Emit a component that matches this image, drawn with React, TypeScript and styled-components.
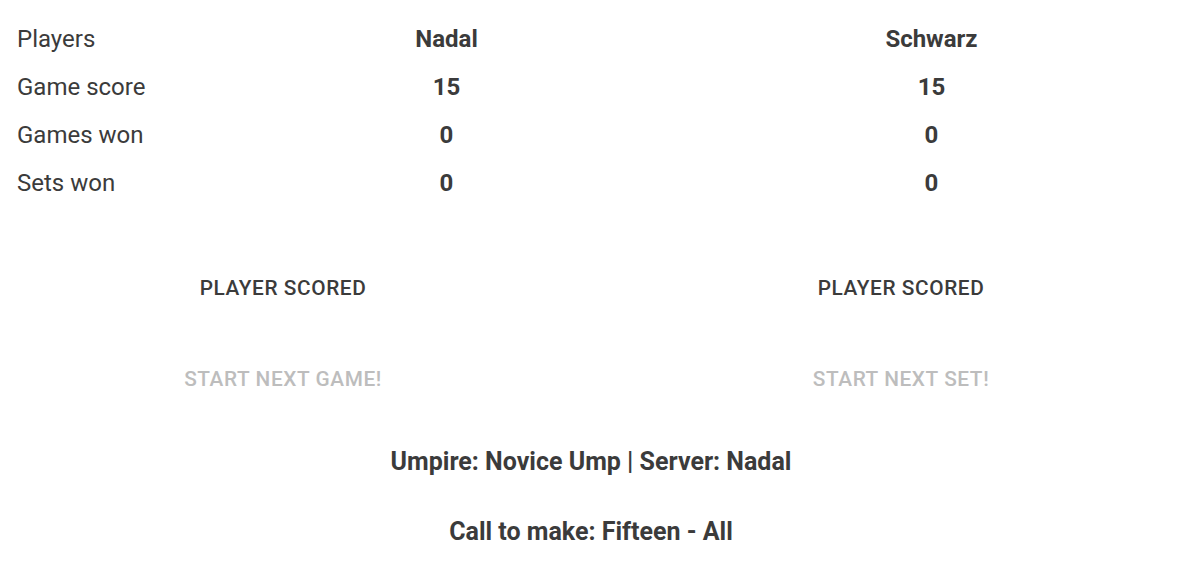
import React from "react";
import styled, { createGlobalStyle } from "styled-components";

const Global = createGlobalStyle`
  body {
    margin: 8px;
    background: #ffffff;
    font-family: Roboto, "Noto Sans", Arial, sans-serif;
    color: #3b3b3b;
  }
`;

const Page = styled.div`
  display: flex;
  flex-direction: column;
`;

const ScoreTable = styled.div`
  display: grid;
  grid-template-columns: 196px 1fr 1fr;
  grid-auto-rows: 48px;
  margin-top: 7px;
`;

const Label = styled.div`
  display: flex;
  align-items: center;
  padding-left: 9px;
  font-size: 24px;
  font-weight: 400;
`;

const Cell = styled.div`
  display: flex;
  align-items: center;
  justify-content: center;
  font-size: 24px;
  font-weight: 700;
`;

const ButtonGrid = styled.div`
  display: grid;
  grid-template-columns: 566px 566px;
  column-gap: 52px;
  row-gap: 43px;
  margin-left: -8px;
  margin-top: 57px;
`;

const Action = styled.button<{ $disabled?: boolean }>`
  justify-self: center;
  background: none;
  border: none;
  padding: 6px 16px;
  font-family: Roboto, "Noto Sans", Arial, sans-serif;
  font-size: 20.8px;
  font-weight: 500;
  letter-spacing: 0.02857em;
  text-transform: uppercase;
  line-height: 1.75;
  color: ${(p) => (p.$disabled ? "#bdbdbd" : "#3b3b3b")};
  cursor: ${(p) => (p.$disabled ? "default" : "pointer")};
`;

const Info = styled.div`
  text-align: center;
  font-size: 25px;
  font-weight: 700;
  line-height: 30px;
`;

const InfoBlock = styled.div`
  display: flex;
  flex-direction: column;
  gap: 40px;
  margin-top: 43px;
`;

const rows: [string, string, string][] = [
  ["Game score", "15", "15"],
  ["Games won", "0", "0"],
  ["Sets won", "0", "0"],
];

export default function App() {
  return (
    <Page>
      <Global />
      <ScoreTable>
        <Label>Players</Label>
        <Cell>Nadal</Cell>
        <Cell>Schwarz</Cell>
        {rows.map(([l, a, b]) => (
          <React.Fragment key={l}>
            <Label>{l}</Label>
            <Cell>{a}</Cell>
            <Cell>{b}</Cell>
          </React.Fragment>
        ))}
      </ScoreTable>
      <ButtonGrid>
        <Action>Player scored</Action>
        <Action>Player scored</Action>
        <Action $disabled disabled>
          Start next game!
        </Action>
        <Action $disabled disabled>
          Start next set!
        </Action>
      </ButtonGrid>
      <InfoBlock>
        <Info>Umpire: Novice Ump | Server: Nadal</Info>
        <Info>Call to make: Fifteen - All</Info>
      </InfoBlock>
    </Page>
  );
}
